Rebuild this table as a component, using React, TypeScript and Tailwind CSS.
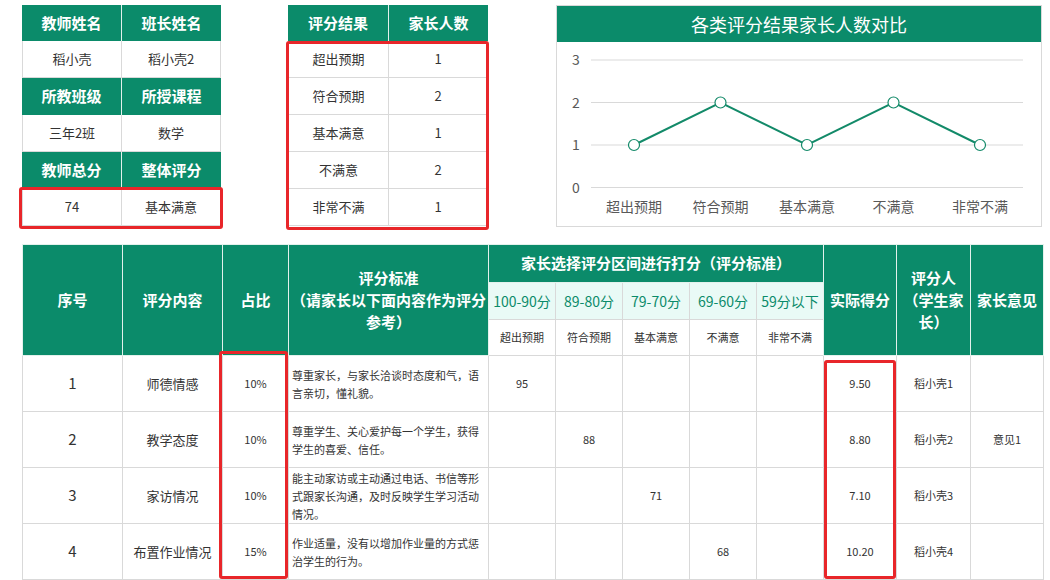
import React from "react";

const teacherRows = [
  ["教师姓名", "班长姓名"],
  ["稻小壳", "稻小壳2"],
  ["所教班级", "所授课程"],
  ["三年2班", "数学"],
  ["教师总分", "整体评分"],
  ["74", "基本满意"],
];

const resultCounts = [
  { label: "超出预期", count: 1 },
  { label: "符合预期", count: 2 },
  { label: "基本满意", count: 1 },
  { label: "不满意", count: 2 },
  { label: "非常不满", count: 1 },
];

const ranges = ["100-90分", "89-80分", "79-70分", "69-60分", "59分以下"];

const colWidths = [
  "w-[100px]",
  "w-[100px]",
  "w-[66px]",
  "w-[200px]",
  "w-[67px]",
  "w-[67px]",
  "w-[67px]",
  "w-[67px]",
  "w-[67px]",
  "w-[73px]",
  "w-[74px]",
  "w-[73px]",
];

const items = [
  {
    no: 1,
    name: "师德情感",
    ratio: "10%",
    desc: ["尊重家长，与家长洽谈时态度和气，语", "言亲切，懂礼貌。"],
    slot: 0,
    score: 95,
    actual: "9.50",
    rater: "稻小壳1",
    note: "",
  },
  {
    no: 2,
    name: "教学态度",
    ratio: "10%",
    desc: ["尊重学生、关心爱护每一个学生，获得", "学生的喜爱、信任。"],
    slot: 1,
    score: 88,
    actual: "8.80",
    rater: "稻小壳2",
    note: "意见1",
  },
  {
    no: 3,
    name: "家访情况",
    ratio: "10%",
    desc: ["能主动家访或主动通过电话、书信等形", "式跟家长沟通，及时反映学生学习活动", "情况。"],
    slot: 2,
    score: 71,
    actual: "7.10",
    rater: "稻小壳3",
    note: "",
  },
  {
    no: 4,
    name: "布置作业情况",
    ratio: "15%",
    desc: ["作业适量，没有以增加作业量的方式惩", "治学生的行为。"],
    slot: 3,
    score: 68,
    actual: "10.20",
    rater: "稻小壳4",
    note: "",
  },
];

const TeacherTable = () => (
  <div className="w-[199px] flex flex-col">
    {teacherRows.map(([a, b], i) =>
      i % 2 === 0 ? (
        <div
          key={i}
          className={`flex ${i === 0 ? "h-[36px]" : "h-[37px]"} bg-[#0b8b6a] text-white font-bold text-[15px]`}
        >
          <div className="w-[100px] flex items-center justify-center border-r border-[#e3f1ec]">{a}</div>
          <div className="flex-1 flex items-center justify-center">{b}</div>
        </div>
      ) : (
        <div key={i} className="flex h-[37px] text-[13px] text-[#333] border-x border-b border-[#d9d9d9]">
          <div className="w-[99px] flex items-center justify-center border-r border-[#d9d9d9]">{a}</div>
          <div className="flex-1 flex items-center justify-center">{b}</div>
        </div>
      )
    )}
  </div>
);

const ResultTable = () => (
  <div className="w-[200px] flex flex-col">
    <div className="flex h-[36px] bg-[#0b8b6a] text-white font-bold text-[15px]">
      <div className="w-[101px] flex items-center justify-center border-r border-[#e3f1ec]">评分结果</div>
      <div className="flex-1 flex items-center justify-center">家长人数</div>
    </div>
    {resultCounts.map((r) => (
      <div key={r.label} className="flex h-[37px] text-[13px] text-[#333] border-x border-b border-[#d9d9d9]">
        <div className="w-[100px] flex items-center justify-center border-r border-[#d9d9d9]">{r.label}</div>
        <div className="flex-1 flex items-center justify-center">{r.count}</div>
      </div>
    ))}
  </div>
);

const LineChart = () => {
  const yOf = (v: number) => 145.5 - v * 42.5;
  const xOf = (i: number) => 77 + i * 86.5;
  const points = resultCounts.map((r, i) => `${xOf(i)},${yOf(r.count)}`).join(" ");
  return (
    <div className="w-[486px] h-[222px] border border-[#d9d9d9] flex flex-col">
      <div className="h-[36px] bg-[#0b8b6a] text-white text-[18px] flex items-center justify-center">
        各类评分结果家长人数对比
      </div>
      <svg width="484" height="184" className="block">
        {[0, 1, 2, 3].map((v) => (
          <g key={v}>
            <line x1="34" x2="466" y1={yOf(v)} y2={yOf(v)} stroke="#d9d9d9" strokeWidth="1" />
            <text x="19" y={yOf(v) + 5} textAnchor="middle" fontSize="14" fill="#595959">
              {v}
            </text>
          </g>
        ))}
        <polyline points={points} fill="none" stroke="#138a69" strokeWidth="2" />
        {resultCounts.map((r, i) => (
          <circle key={r.label} cx={xOf(i)} cy={yOf(r.count)} r="5.5" fill="#fff" stroke="#138a69" strokeWidth="1.2" />
        ))}
        {resultCounts.map((r, i) => (
          <text key={r.label} x={xOf(i)} y="170" textAnchor="middle" fontSize="14" fill="#595959">
            {r.label}
          </text>
        ))}
      </svg>
    </div>
  );
};

const greenTh = "bg-[#0b8b6a] text-white font-bold text-[15px] border border-[#e3f1ec] align-middle";

const ScoreTable = () => (
  <table className="table-fixed border-collapse w-[1021px] mt-[17px] ml-[22px]">
    <colgroup>
      {colWidths.map((w, i) => (
        <col key={i} className={w} />
      ))}
    </colgroup>
    <thead>
      <tr className="h-[38px]">
        <th rowSpan={3} className={greenTh}>序号</th>
        <th rowSpan={3} className={greenTh}>评分内容</th>
        <th rowSpan={3} className={greenTh}>占比</th>
        <th rowSpan={3} className={`${greenTh} leading-[22px]`}>
          评分标准
          <br />
          （请家长以下面内容作为评分
          <br />
          参考）
        </th>
        <th colSpan={5} className={`${greenTh} font-bold`}>
          家长选择评分区间进行打分（评分标准）
        </th>
        <th rowSpan={3} className={greenTh}>实际得分</th>
        <th rowSpan={3} className={`${greenTh} leading-[22px]`}>
          评分人
          <br />
          （学生家
          <br />
          长）
        </th>
        <th rowSpan={3} className={greenTh}>家长意见</th>
      </tr>
      <tr className="h-[37px]">
        {ranges.map((r) => (
          <th key={r} className="bg-[#e9faf6] text-[#0b8b6a] font-normal text-[14px] border border-[#d9d9d9]">
            {r}
          </th>
        ))}
      </tr>
      <tr className="h-[36px]">
        {resultCounts.map((r) => (
          <td key={r.label} className="text-center text-[11px] text-[#333] border border-[#d9d9d9]">
            {r.label}
          </td>
        ))}
      </tr>
    </thead>
    <tbody>
      {items.map((it) => (
        <tr key={it.no} className="h-[56px] text-[#333]">
          <td className="text-center text-[15px] border border-[#d9d9d9]">{it.no}</td>
          <td className="text-center text-[13px] border border-[#d9d9d9]">{it.name}</td>
          <td className="text-center text-[11px] border border-[#d9d9d9]">{it.ratio}</td>
          <td className="text-left pl-[3px] text-[11px] leading-[18px] border border-[#d9d9d9]">
            {it.desc.map((line, i) => (
              <div key={i}>{line}</div>
            ))}
          </td>
          {[0, 1, 2, 3, 4].map((s) => (
            <td key={s} className="text-center text-[11px] border border-[#d9d9d9]">
              {s === it.slot ? it.score : ""}
            </td>
          ))}
          <td className="text-center text-[11px] border border-[#d9d9d9]">{it.actual}</td>
          <td className="text-center text-[11px] border border-[#d9d9d9]">{it.rater}</td>
          <td className="text-center text-[11px] border border-[#d9d9d9]">{it.note}</td>
        </tr>
      ))}
    </tbody>
  </table>
);

export default function App() {
  return (
    <div className="relative w-[1050px] h-[580px] bg-white overflow-hidden font-['Noto_Sans_CJK_SC',sans-serif]">
      <div className="flex pt-[5px] pl-[22px]">
        <TeacherTable />
        <div className="ml-[67px]">
          <ResultTable />
        </div>
        <div className="ml-[68px]">
          <LineChart />
        </div>
      </div>
      <ScoreTable />

      {/* highlight boxes */}
      <div className="absolute left-[19px] top-[187px] w-[204px] h-[42px] border-[3px] border-[#e8262a] rounded-[3px]" />
      <div className="absolute left-[286px] top-[41px] w-[203px] h-[189px] border-[3px] border-[#e8262a] rounded-[3px]" />
      <div className="absolute left-[219px] top-[351px] w-[69px] h-[228px] border-[3px] border-[#e8262a] rounded-[3px]" />
      <div className="absolute left-[824px] top-[360px] w-[72px] h-[219px] border-[3px] border-[#e8262a] rounded-[3px]" />
    </div>
  );
}
